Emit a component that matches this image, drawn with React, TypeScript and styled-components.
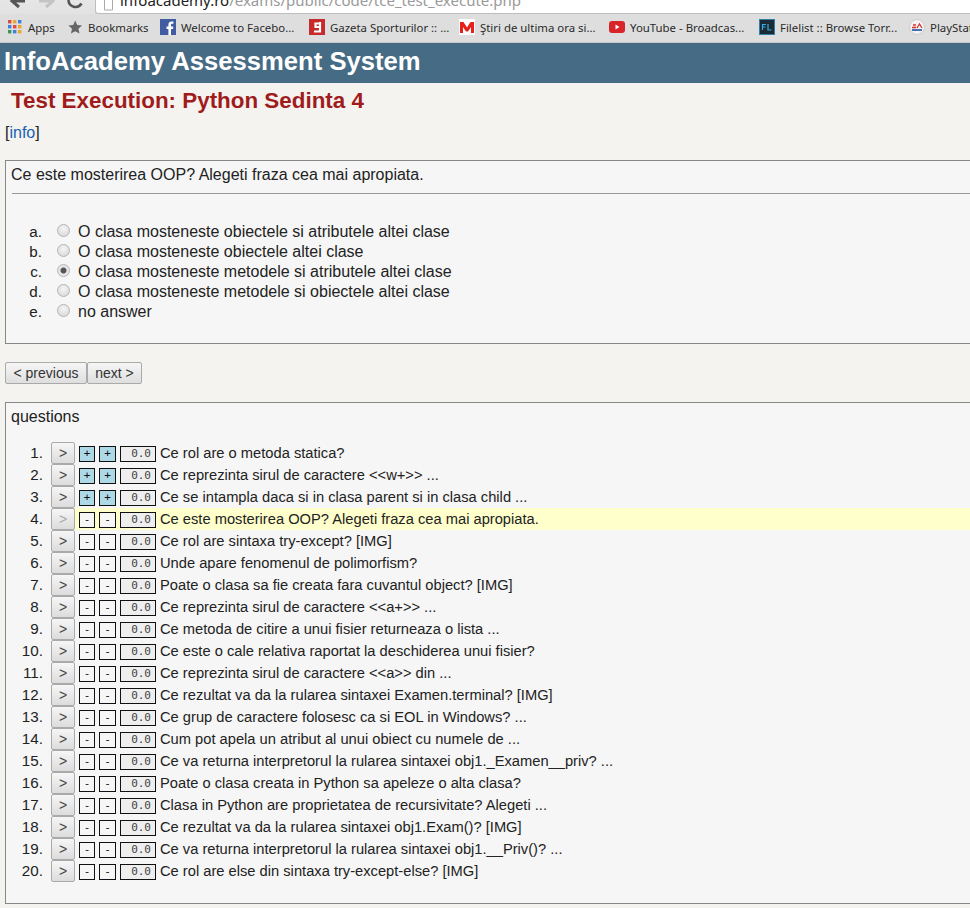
import React from "react";
import styled, { createGlobalStyle, css } from "styled-components";

const Global = createGlobalStyle`
  html, body { margin: 0; padding: 0; background: #f4f3ef; overflow: hidden; }
  body { width: 970px; height: 908px; font-family: "Liberation Sans", Arial, sans-serif; color: #222; }
`;
const Page = styled.div`width: 970px; height: 908px; overflow: hidden; display: flex; flex-direction: column;`;
const Chrome = styled.div`height: 43px; flex: none; display: flex; flex-direction: column; background: #dedede; border-bottom: 1px solid #c8c8c8; box-sizing: border-box;`;
const NavRow = styled.div`height: 14px; flex: none; display: flex; align-items: flex-end; background: linear-gradient(#e6e6e6, #e2e2e2); overflow: hidden;`;
const NavIcons = styled.div`width: 95px; flex: none; height: 14px; display: flex; align-items: flex-end; overflow: hidden;`;
const AddressBar = styled.div`flex: 1; height: 14px; background: #fff; border: 1px solid #bdbdbd; border-top: 0; border-right: 0; border-radius: 0 0 0 3px; box-sizing: border-box; display: flex; align-items: flex-end; overflow: hidden; font-family: "Noto Sans", sans-serif; font-size: 15px; line-height: 20px; white-space: nowrap; color: #9a9a9a; padding-left: 7px;`;
const UrlText = styled.div`height: 13px; display: flex; align-items: flex-end; margin-left: 6px; padding-bottom: 3px; box-sizing: border-box;`;
const UrlHost = styled.span`color: #222;`;
const Bookmarks = styled.div`height: 28px; flex: none; display: flex; align-items: center; padding: 0 0 2px 8px; box-sizing: border-box; gap: 15px; white-space: nowrap; overflow: hidden; font-family: "Noto Sans", sans-serif; font-size: 11.4px; color: #2a2a2a;`;
const Mark = styled.div<{ $w: number }>`
  display: flex; align-items: center; gap: 5px; flex: none; width: ${p => p.$w}px;
  & > svg { flex: none; }
`;
const Banner = styled.div`height: 40px; flex: none; background: #466c85; color: #fff; font-weight: bold; font-size: 25.65px; line-height: 37px; padding-left: 4px;`;
const Title = styled.h1`margin: 0; font-size: 22.4px; font-weight: bold; line-height: 25px; color: #a01c1c; padding: 5px 0 0 11px;`;
const InfoLine = styled.div`font-size: 16px; line-height: 18px; margin: 11px 0 0 5px;`;
const InfoLink = styled.a`color: #1a5fb4; text-decoration: none;`;
const Box = styled.div`margin: 0 -40px 0 5px; border: 1px solid #888; background: #f6f6f6; box-sizing: border-box; padding: 5px 0 0 5px; flex: none;`;
const QuestionBox = styled(Box)`height: 184px; margin-top: 18px;`;
const BoxHeading = styled.div`font-size: 16px; line-height: 18px;`;
const Rule = styled.hr`margin: 9px 0 0 1px; border: 0; border-top: 1px solid #999; height: 0;`;
const Answers = styled.div`margin-top: 28px; display: flex; flex-direction: column;`;
const AnswerRow = styled.div`display: flex; align-items: center; height: 20px; font-size: 16px;`;
const AnswerKey = styled.span`width: 31px; text-align: right; flex: none; font-size: 15.2px; margin-top: -2px;`;
const Radio = styled.span<{ $on?: boolean }>`
  width: 13px; height: 13px; border-radius: 50%; flex: none; box-sizing: border-box; margin: -3px 8px 0 15px;
  border: 1px solid #b5b5b5; background: radial-gradient(circle at 50% 35%, #f5f5f5, #d4d4d4);
  ${p => p.$on && css`background: radial-gradient(circle, #555 0 2.5px, #e6e6e6 3.5px);`}
`;
const Pager = styled.div`display: flex; margin: 18px 0 0 5px; height: 22px; flex: none;`;
const PagerButton = styled.button<{ $w: number }>`
  width: ${p => p.$w}px; height: 22px; padding: 0; margin: 0; box-sizing: border-box; border: 1px solid #aaa; border-radius: 2px;
  background: linear-gradient(#f6f6f6, #dedede); font: 14px "Liberation Sans", Arial, sans-serif; color: #333;
`;
const QuestionsBox = styled(Box)`height: 502px; margin-top: 18px;`;
const List = styled.div`margin-top: 16px; display: flex; flex-direction: column;`;
const Row = styled.div`display: flex; align-items: flex-start; height: 22px; white-space: nowrap;`;
const Num = styled.span`width: 32px; text-align: right; flex: none; font-size: 15.2px; line-height: 22px; margin-right: 8px;`;
const Line = styled.div<{ $hi?: boolean }>`flex: 1; display: flex; align-items: flex-start; height: 22px; padding-left: 4px; background: ${p => (p.$hi ? "#ffffcc" : "transparent")};`;
const Go = styled.button<{ $dim?: boolean }>`
  width: 24px; height: 22px; flex: none; padding: 0; box-sizing: border-box; border: 1px solid #aaa; border-radius: 2px;
  background: linear-gradient(#f6f6f6, #dcdcdc); font: 14px "Liberation Sans", Arial, sans-serif; color: ${p => (p.$dim ? "#aaa" : "#444")};
`;
const Mini = styled.span<{ $on?: boolean; $w: number }>`
  width: ${p => p.$w}px; height: 16px; flex: none; box-sizing: border-box; border: 1px solid #111; margin: 4px 4px 0 0;
  background: ${p => (p.$on ? "#add8e6" : "#f6f6f6")}; font: 11px/14px "DejaVu Sans Mono", monospace; text-align: center; color: #111;
`;
const Score = styled.span`
  width: 36px; height: 16px; flex: none; box-sizing: border-box; border: 1px solid #111; margin: 4px 4px 0 0;
  background: #eeeeee; font: 11px/14px "DejaVu Sans Mono", monospace; text-align: right; padding-right: 4px; color: #444;
`;
const Label = styled.span`font-size: 14.7px; line-height: 22px; color: #222;`;

const Grid = () => (
  <svg width="15" height="14" viewBox="0 0 15 14">
    {[0, 5, 10].map(y => [0, 5, 10].map(x => (
      <rect key={`${x}${y}`} x={x} y={y} width="3.4" height="3.4"
        fill={y === 0 ? (x === 0 ? "#e04a3f" : x === 5 ? "#e9a82c" : "#3f7fe0") : y === 5 ? (x === 0 ? "#3f7fe0" : x === 5 ? "#e04a3f" : "#e9a82c") : (x === 0 ? "#2f9e54" : x === 5 ? "#3f7fe0" : "#e9a82c")} />
    )))}
  </svg>
);
const Star = () => <svg width="15" height="14" viewBox="0 0 25 24"><path fill="#666" d="M12 1l3.4 7.6 8.3.9-6.2 5.600 1.800 8.200L12 19.100 4.700 23.300l1.800-8.200L.3 9.500l8.300-.9z" /></svg>;
const Fb = () => <svg width="16" height="16" viewBox="0 0 16 16"><rect width="16" height="16" fill="#3f5da0" /><path fill="#fff" d="M11 16V10h2l.3-2.500H11V6c0-.8.3-1.200 1.200-1.200h1.200V2.600C13 2.500 12.300 2.500 11.500 2.500 9.700 2.500 8.400 3.600 8.400 5.700v1.800H6.500V10h1.900v6z" /></svg>;
const Gs = () => <svg width="16" height="16" viewBox="0 0 16 16"><rect width="16" height="16" fill="#c62a2a" /><path fill="none" stroke="#fff" strokeWidth="2.200" d="M11 4.500H6.500v3.500H11V3M11 7v5.500H5" /></svg>;
const Ms = () => <svg width="16" height="16" viewBox="0 0 16 16"><rect width="16" height="16" fill="#fff" /><path fill="#e8201c" d="M1 14V3h3.500L8 8.500 11.500 3H15v11h-3V8l-3 4.500H7L4 8v6z" /></svg>;
const Yt = () => <svg width="16" height="16" viewBox="0 0 16 16"><rect y="2" width="16" height="12" rx="3" fill="#d9252a" /><path fill="#fff" d="M6.500 5.500v5l4-2.500z" /></svg>;
const Fl = () => <svg width="16" height="16" viewBox="0 0 16 16"><rect x=".5" y=".5" width="15" height="15" fill="#1c2a33" stroke="#2b7fa8" /><path fill="none" stroke="#35b0e6" strokeWidth="1.200" d="M3.500 11V5.500H7M3.500 8H6.500M9 5v6h3.500" /></svg>;
const Ea = () => <svg width="16" height="16" viewBox="0 0 16 16"><circle cx="8" cy="8" r="7.500" fill="#f2f2f2" stroke="#ccc" /><path fill="none" stroke="#d8332b" strokeWidth="1.300" d="M3 8.500h4M4 6h3l-2 0M8 9l2.500-4L13 9" /><rect x="3" y="10" width="10" height="2" fill="#4a6fb5" /></svg>;
const NavArrows = () => (
  <svg width="95" height="14" viewBox="0 0 95 14">
    <path fill="none" stroke="#555" strokeWidth="3" d="M25 1H13M19 -5L12 1l7 6" />
    <path fill="none" stroke="#c4c4c4" strokeWidth="3" d="M39 1h13M46 -5l7 6-7 6" />
    <path fill="none" stroke="#555" strokeWidth="2.600" d="M81.500 3.500A7 7 0 0 1 68.500 0" />
  </svg>
);
const PageIcon = () => <svg width="11" height="13" viewBox="0 0 11 13"><path fill="#fff" stroke="#aaa" d="M1.500 -3h8v13h-8z" /></svg>;

const marks: [React.ReactNode, string, number][] = [
  [<Grid key="a" />, "Apps", 45],
  [<Star key="b" />, "Bookmarks", 77],
  [<Fb key="c" />, "Welcome to Facebo...", 134],
  [<Gs key="d" />, "Gazeta Sporturilor :: ...", 135],
  [<Ms key="e" />, "Ştiri de ultima ora si...", 135],
  [<Yt key="f" />, "YouTube - Broadcas...", 135],
  [<Fl key="g" />, "Filelist :: Browse Torr...", 135],
  [<Ea key="h" />, "PlayStation", 100],
];
const answers = [
  ["a.", "O clasa mosteneste obiectele si atributele altei clase"],
  ["b.", "O clasa mosteneste obiectele altei clase"],
  ["c.", "O clasa mosteneste metodele si atributele altei clase"],
  ["d.", "O clasa mosteneste metodele si obiectele altei clase"],
  ["e.", "no answer"],
];
const questions = [
  "Ce rol are o metoda statica?",
  "Ce reprezinta sirul de caractere <<w+>> ...",
  "Ce se intampla daca si in clasa parent si in clasa child ...",
  "Ce este mosterirea OOP? Alegeti fraza cea mai apropiata.",
  "Ce rol are sintaxa try-except? [IMG]",
  "Unde apare fenomenul de polimorfism?",
  "Poate o clasa sa fie creata fara cuvantul object? [IMG]",
  "Ce reprezinta sirul de caractere <<a+>> ...",
  "Ce metoda de citire a unui fisier returneaza o lista ...",
  "Ce este o cale relativa raportat la deschiderea unui fisier?",
  "Ce reprezinta sirul de caractere <<a>> din ...",
  "Ce rezultat va da la rularea sintaxei Examen.terminal? [IMG]",
  "Ce grup de caractere folosesc ca si EOL in Windows? ...",
  "Cum pot apela un atribut al unui obiect cu numele de ...",
  "Ce va returna interpretorul la rularea sintaxei obj1._Examen__priv? ...",
  "Poate o clasa creata in Python sa apeleze o alta clasa?",
  "Clasa in Python are proprietatea de recursivitate? Alegeti ...",
  "Ce rezultat va da la rularea sintaxei obj1.Exam()? [IMG]",
  "Ce va returna interpretorul la rularea sintaxei obj1.__Priv()? ...",
  "Ce rol are else din sintaxa try-except-else? [IMG]",
];

export default function App() {
  return (
    <Page>
      <Global />
      <Chrome>
        <NavRow>
          <NavIcons><NavArrows /></NavIcons>
          <AddressBar>
            <PageIcon />
            <UrlText><span><UrlHost>infoacademy.ro</UrlHost>/exams/public/code/tce_test_execute.php</span></UrlText>
          </AddressBar>
        </NavRow>
        <Bookmarks>
          {marks.map(([icon, text, w]) => <Mark key={text} $w={w}>{icon}<span>{text}</span></Mark>)}
        </Bookmarks>
      </Chrome>
      <Banner>InfoAcademy Assessment System</Banner>
      <Title>Test Execution: Python Sedinta 4</Title>
      <InfoLine>[<InfoLink href="#">info</InfoLink>]</InfoLine>
      <QuestionBox>
        <BoxHeading>Ce este mosterirea OOP? Alegeti fraza cea mai apropiata.</BoxHeading>
        <Rule />
        <Answers>
          {answers.map(([k, t], i) => (
            <AnswerRow key={k}><AnswerKey>{k}</AnswerKey><Radio $on={i === 2} /><span>{t}</span></AnswerRow>
          ))}
        </Answers>
      </QuestionBox>
      <Pager>
        <PagerButton $w={82}>&lt; previous</PagerButton>
        <PagerButton $w={55}>next &gt;</PagerButton>
      </Pager>
      <QuestionsBox>
        <BoxHeading>questions</BoxHeading>
        <List>
          {questions.map((q, i) => {
            const done = i < 3;
            const s = done ? "+" : "-";
            return (
              <Row key={q}>
                <Num>{i + 1}.</Num>
                <Go $dim={i === 3}>&gt;</Go>
                <Line $hi={i === 3}>
                  <Mini $on={done} $w={16}>{s}</Mini>
                  <Mini $on={done} $w={17}>{s}</Mini>
                  <Score>0.0</Score>
                  <Label>{q}</Label>
                </Line>
              </Row>
            );
          })}
        </List>
      </QuestionsBox>
    </Page>
  );
}
